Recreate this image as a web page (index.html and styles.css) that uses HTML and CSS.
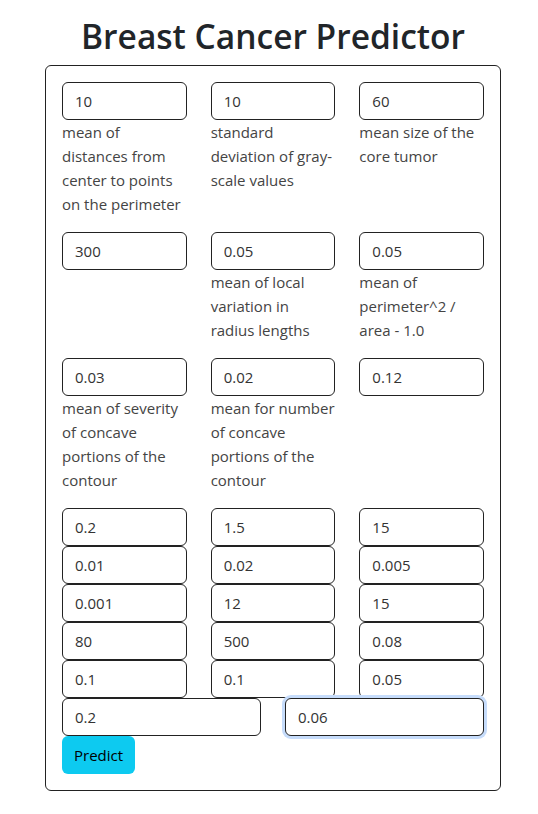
FILE: index.html
```html
<!DOCTYPE html>
<html lang="en">
<head>
  <meta charset="UTF-8">
  <meta name="viewport" content="width=device-width, initial-scale=1.0">
  <title>Breast Cancer Predictor</title>
  <link rel="stylesheet" href="styles.css">
</head>
<body>
  <div class="container">
    <h1 class="title">Breast Cancer Predictor</h1>

    <form class="card">
      <!-- fields with descriptions -->
      <div class="grid3 described">
        <div class="field">
          <input class="form-control" type="text" value="10">
          <label>mean of distances from center to points on the perimeter</label>
        </div>
        <div class="field">
          <input class="form-control" type="text" value="10">
          <label>standard deviation of gray-scale values</label>
        </div>
        <div class="field">
          <input class="form-control" type="text" value="60">
          <label>mean size of the core tumor</label>
        </div>
      </div>

      <div class="grid3 described">
        <div class="field">
          <input class="form-control" type="text" value="300">
        </div>
        <div class="field">
          <input class="form-control" type="text" value="0.05">
          <label>mean of local variation in radius lengths</label>
        </div>
        <div class="field">
          <input class="form-control" type="text" value="0.05">
          <label>mean of perimeter^2 / area - 1.0</label>
        </div>
      </div>

      <div class="grid3 described">
        <div class="field">
          <input class="form-control" type="text" value="0.03">
          <label>mean of severity of concave portions of the contour</label>
        </div>
        <div class="field">
          <input class="form-control" type="text" value="0.02">
          <label>mean for number of concave portions of the contour</label>
        </div>
        <div class="field">
          <input class="form-control" type="text" value="0.12">
        </div>
      </div>

      <!-- the rest, no descriptions -->
      <div class="grid3">
        <input class="form-control" type="text" value="0.2">
        <input class="form-control" type="text" value="1.5">
        <input class="form-control" type="text" value="15">
        <input class="form-control" type="text" value="0.01">
        <input class="form-control" type="text" value="0.02">
        <input class="form-control" type="text" value="0.005">
        <input class="form-control" type="text" value="0.001">
        <input class="form-control" type="text" value="12">
        <input class="form-control" type="text" value="15">
        <input class="form-control" type="text" value="80">
        <input class="form-control" type="text" value="500">
        <input class="form-control" type="text" value="0.08">
        <input class="form-control" type="text" value="0.1">
        <input class="form-control" type="text" value="0.1">
        <input class="form-control" type="text" value="0.05">
      </div>
      <div class="grid2">
        <input class="form-control" type="text" value="0.2">
        <input class="form-control focused" type="text" value="0.06">
      </div>

      <button type="button" class="btn-predict">Predict</button>
    </form>
  </div>
</body>
</html>
```

FILE: styles.css
```css
body {
  margin: 0;
  font-family: "Open Sans", "Noto Sans", Arial, sans-serif;
  font-size: 15px;
  line-height: 24px;
  color: #212529;
  background: #fff;
}

.container {
  width: 456px;
  margin-left: 45px;
}

.title {
  margin: 0;
  padding: 14px 0 7px;
  text-align: center;
  font-size: 33.5px;
  line-height: 44px;
  font-weight: 600;
  color: #212529;
}

.card {
  border: 1px solid #222;
  border-radius: 6px;
  padding: 16px;
}

.grid3 {
  display: grid;
  grid-template-columns: repeat(3, 1fr);
  column-gap: 24px;
}

.grid2 {
  display: grid;
  grid-template-columns: repeat(2, 1fr);
  column-gap: 24px;
}

.described {
  margin-bottom: 16px;
}

.field label {
  display: block;
  color: #444;
  font-weight: 400;
}

.form-control {
  display: block;
  box-sizing: border-box;
  width: 100%;
  height: 38px;
  margin: 0;
  padding: 6px 12px;
  font-family: inherit;
  font-size: 15px;
  line-height: 24px;
  color: #333;
  font-weight: 400;
  background: #fff;
  border: 1px solid #222;
  border-radius: 6px;
  outline: none;
}

.form-control.focused {
  box-shadow: 0 0 0 3px #c6dcfb;
}

.btn-predict {
  display: block;
  height: 38px;
  padding: 6px 12px;
  font-family: inherit;
  font-size: 15px;
  line-height: 24px;
  color: #000;
  background-color: #0dcaf0;
  border: none;
  border-radius: 6px;
  cursor: pointer;
}
```
